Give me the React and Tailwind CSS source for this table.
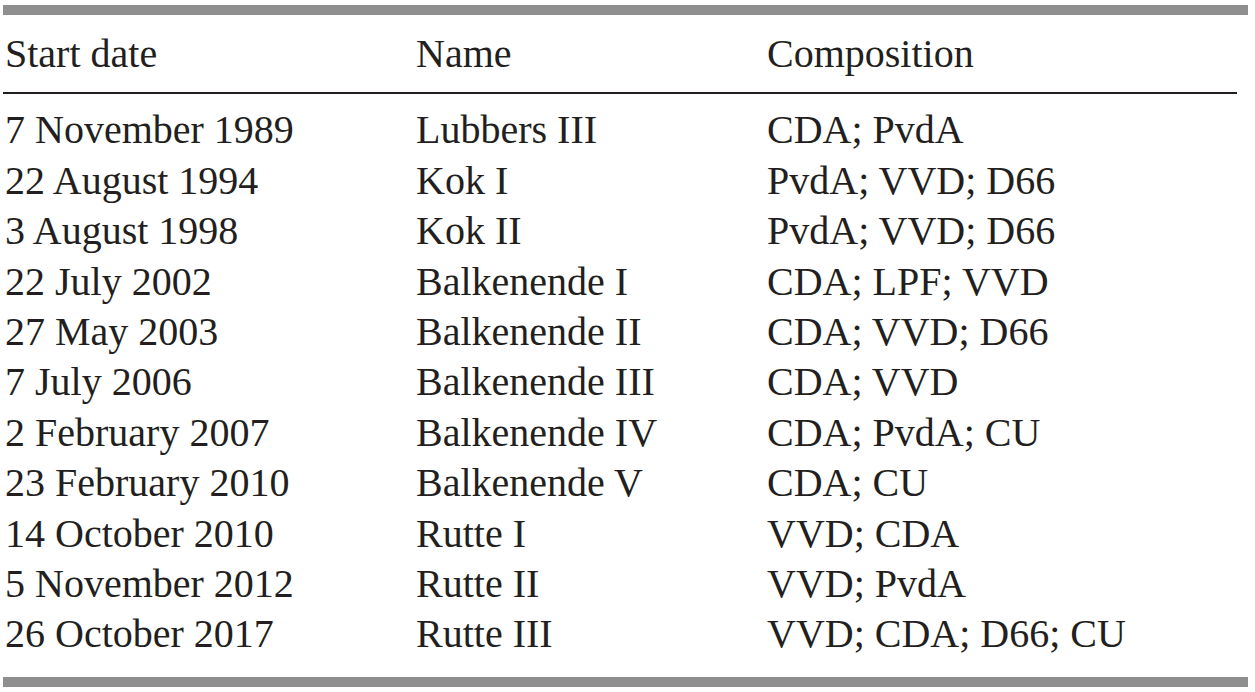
const rows = [
  ["7 November 1989", "Lubbers III", "CDA; PvdA"],
  ["22 August 1994", "Kok I", "PvdA; VVD; D66"],
  ["3 August 1998", "Kok II", "PvdA; VVD; D66"],
  ["22 July 2002", "Balkenende I", "CDA; LPF; VVD"],
  ["27 May 2003", "Balkenende II", "CDA; VVD; D66"],
  ["7 July 2006", "Balkenende III", "CDA; VVD"],
  ["2 February 2007", "Balkenende IV", "CDA; PvdA; CU"],
  ["23 February 2010", "Balkenende V", "CDA; CU"],
  ["14 October 2010", "Rutte I", "VVD; CDA"],
  ["5 November 2012", "Rutte II", "VVD; PvdA"],
  ["26 October 2017", "Rutte III", "VVD; CDA; D66; CU"],
];

export default function App() {
  return (
    <div className="w-[1255px] h-[692px] bg-white pt-[5px] pl-[3px] pr-[7px] font-['Liberation_Serif',serif] text-[40px] leading-[50.4px] text-[#231f20]">
      <div className="h-[10px] bg-[#8f8f8f]" />
      <div className="grid grid-cols-[411px_351px_1fr] pl-[2px] pt-[14px] pb-[13px]">
        <div>Start date</div>
        <div>Name</div>
        <div>Composition</div>
      </div>
      <div className="h-[2px] mr-[11px] bg-[#231f20]" />
      <div className="pt-[11px] pb-[17px] pl-[2px]">
        {rows.map((r) => (
          <div key={r[0]} className="grid grid-cols-[411px_351px_1fr]">
            <div>{r[0]}</div>
            <div>{r[1]}</div>
            <div>{r[2]}</div>
          </div>
        ))}
      </div>
      <div className="h-[10px] bg-[#8f8f8f]" />
    </div>
  );
}
